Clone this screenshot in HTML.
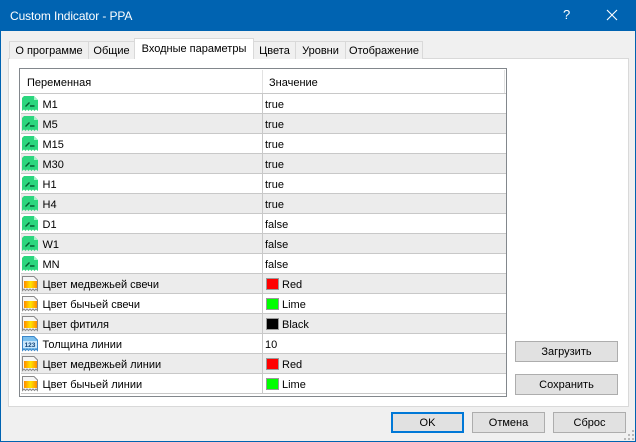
<!DOCTYPE html>
<html><head><meta charset="utf-8"><style>
html,body{margin:0;padding:0;background:#f0f0f0}
body{width:636px;height:442px;position:relative;overflow:hidden;font-family:"Liberation Sans",sans-serif;font-size:11px;color:#000}
.a{position:absolute;box-sizing:border-box}
.t{position:absolute;white-space:nowrap;line-height:14px}
.tab{position:absolute;box-sizing:border-box;top:41px;height:18px;background:#f0f0f0;border:1px solid #d9d9d9;border-bottom:none;text-align:center;line-height:19px;white-space:nowrap}
.btn{position:absolute;box-sizing:border-box;background:#e1e1e1;border:1px solid #adadad;text-align:center;line-height:20px;white-space:nowrap}
.row{position:absolute;left:1px;width:485px;height:20px;border-bottom:1px solid #c8c8c8;box-sizing:border-box}
.g{background:#ececec}
.row .n{position:absolute;left:21.500px;top:4px;line-height:14px;white-space:nowrap}
.row .v{position:absolute;left:244px;top:4px;line-height:14px;white-space:nowrap}
.row .c{position:absolute;left:245px;top:4px;width:13px;height:12px;box-sizing:border-box;border:1px solid #999}
.row .v2{position:absolute;left:261px;top:4px;line-height:14px}
.row .sep{position:absolute;left:241px;top:0;width:1px;height:20px;background:#c8c8c8}
.row svg{position:absolute;left:1px;top:2px}
</style></head><body>
<svg width="0" height="0" style="position:absolute"><defs>
<linearGradient id="o" x1="0" x2="1" y1="0" y2="0"><stop offset="0" stop-color="#ff8a00"/><stop offset=".5" stop-color="#ffe600"/><stop offset="1" stop-color="#ff8a00"/></linearGradient>
<symbol id="i1" viewBox="0 0 16 16"><path d="M0 2L2 0H12L16 4V15L14 13.500L12.500 15L11 13.500L9.500 15L8 13.500L6.500 15L5 13.500L3.500 15L2 13.500L0 15Z" fill="#2bd67e"/><path d="M12 0V4H16Z" fill="#a5f0c8"/><path d="M3.500 10.500L7.500 6.500M8 10H12.500" fill="none" stroke="#075c30" stroke-width="1.400"/></symbol>
<symbol id="i2" viewBox="0 0 16 16"><path d="M.5 .5H12L15.500 4V14.500L14 13L12.500 14.500L11 13L9.500 14.500L8 13L6.500 14.500L5 13L3.500 14.500L2 13L.5 14.500Z" fill="#f6f6f6" stroke="#8a8a8a"/><rect x="2" y="5" width="13" height="7" fill="url(#o)"/></symbol>
<symbol id="i3" viewBox="0 0 16 16"><path d="M.5 .5H12L15.500 4V14.500L14 13L12.500 14.500L11 13L9.500 14.500L8 13L6.500 14.500L5 13L3.500 14.500L2 13L.5 14.500Z" fill="#7cc0ee" stroke="#3a86c8"/><rect x="1" y="5" width="14" height="7" fill="#c9e6fa"/><text x="8" y="11" font-family="Liberation Sans" font-size="6.500" font-weight="bold" fill="#12457a" text-anchor="middle">123</text></symbol>
</defs></svg>

<div class="a" style="left:0;top:0;width:636px;height:31px;background:#0063b1"></div>
<div class="a" style="left:0;top:0;width:1px;height:442px;background:#0063b1"></div>
<div class="a" style="left:635px;top:0;width:1px;height:442px;background:#0063b1"></div>
<div class="a" style="left:0;top:441px;width:636px;height:1px;background:#0063b1"></div>
<div class="t" style="left:10px;top:8px;color:#fff;font-size:12px;line-height:16px;letter-spacing:-.1px">Custom Indicator - PPA</div>
<div class="t" style="left:563px;top:7px;color:#fff;font-size:13px;line-height:16px">?</div>
<svg class="a" style="left:606px;top:9px" width="12" height="12"><path d="M1 1L11 11M11 1L1 11" stroke="#fff" stroke-width="1.100"/></svg>

<div class="a" style="left:8px;top:58px;width:621px;height:349px;background:#fff;border:1px solid #d9d9d9"></div>
<div class="tab" style="left:9px;width:80px">О программе</div>
<div class="tab" style="left:88px;width:47px">Общие</div>
<div class="tab" style="left:253px;width:43px">Цвета</div>
<div class="tab" style="left:295px;width:51px">Уровни</div>
<div class="tab" style="left:345px;width:78px">Отображение</div>
<div class="tab" style="left:134px;top:38px;width:120px;height:21px;background:#fff;line-height:20px;border-bottom:none">Входные параметры</div>

<div class="a" style="left:19px;top:68px;width:488px;height:329px;background:#fff;border:1px solid #82878c">
<div class="t" style="left:7px;top:7px">Переменная</div>
<div class="a" style="left:242px;top:1px;width:1px;height:24px;background:#e2e2e2"></div>
<div class="t" style="left:249px;top:7px">Значение</div>
<div class="a" style="left:484px;top:1px;width:1px;height:24px;background:#e2e2e2"></div>
<div class="a" style="left:1px;top:24px;width:485px;height:1px;background:#c8c8c8"></div>

<div class="row" style="top:25px"><svg width="16" height="16"><use href="#i1"/></svg><span class="n">M1</span><i class="sep"></i><span class="v">true</span></div>
<div class="row g" style="top:45px"><svg width="16" height="16"><use href="#i1"/></svg><span class="n">M5</span><i class="sep"></i><span class="v">true</span></div>
<div class="row" style="top:65px"><svg width="16" height="16"><use href="#i1"/></svg><span class="n">M15</span><i class="sep"></i><span class="v">true</span></div>
<div class="row g" style="top:85px"><svg width="16" height="16"><use href="#i1"/></svg><span class="n">M30</span><i class="sep"></i><span class="v">true</span></div>
<div class="row" style="top:105px"><svg width="16" height="16"><use href="#i1"/></svg><span class="n">H1</span><i class="sep"></i><span class="v">true</span></div>
<div class="row g" style="top:125px"><svg width="16" height="16"><use href="#i1"/></svg><span class="n">H4</span><i class="sep"></i><span class="v">true</span></div>
<div class="row" style="top:145px"><svg width="16" height="16"><use href="#i1"/></svg><span class="n">D1</span><i class="sep"></i><span class="v">false</span></div>
<div class="row g" style="top:165px"><svg width="16" height="16"><use href="#i1"/></svg><span class="n">W1</span><i class="sep"></i><span class="v">false</span></div>
<div class="row" style="top:185px"><svg width="16" height="16"><use href="#i1"/></svg><span class="n">MN</span><i class="sep"></i><span class="v">false</span></div>
<div class="row g" style="top:205px"><svg width="16" height="16"><use href="#i2"/></svg><span class="n">Цвет медвежьей свечи</span><i class="sep"></i><span class="c" style="background:#f00"></span><span class="v2">Red</span></div>
<div class="row" style="top:225px"><svg width="16" height="16"><use href="#i2"/></svg><span class="n">Цвет бычьей свечи</span><i class="sep"></i><span class="c" style="background:#0f0"></span><span class="v2">Lime</span></div>
<div class="row g" style="top:245px"><svg width="16" height="16"><use href="#i2"/></svg><span class="n">Цвет фитиля</span><i class="sep"></i><span class="c" style="background:#000"></span><span class="v2">Black</span></div>
<div class="row" style="top:265px"><svg width="16" height="16"><use href="#i3"/></svg><span class="n">Толщина линии</span><i class="sep"></i><span class="v">10</span></div>
<div class="row g" style="top:285px"><svg width="16" height="16"><use href="#i2"/></svg><span class="n">Цвет медвежьей линии</span><i class="sep"></i><span class="c" style="background:#f00"></span><span class="v2">Red</span></div>
<div class="row" style="top:305px"><svg width="16" height="16"><use href="#i2"/></svg><span class="n">Цвет бычьей линии</span><i class="sep"></i><span class="c" style="background:#0f0"></span><span class="v2">Lime</span></div>
</div>

<div class="btn" style="left:515px;top:341px;width:103px;height:21px">Загрузить</div>
<div class="btn" style="left:515px;top:374px;width:103px;height:21px">Сохранить</div>
<div class="btn" style="left:391px;top:412px;width:73px;height:21px;border:2px solid #0078d7;line-height:18px">OK</div>
<div class="btn" style="left:472px;top:412px;width:73px;height:21px">Отмена</div>
<div class="btn" style="left:553px;top:412px;width:73px;height:21px">Сброс</div>
<svg class="a" style="left:624px;top:430px" width="11" height="11"><g fill="#b8b8b8"><rect x="8" y="0" width="2" height="2"/><rect x="4" y="4" width="2" height="2"/><rect x="8" y="4" width="2" height="2"/><rect x="0" y="8" width="2" height="2"/><rect x="4" y="8" width="2" height="2"/><rect x="8" y="8" width="2" height="2"/></g></svg>
</body></html>
